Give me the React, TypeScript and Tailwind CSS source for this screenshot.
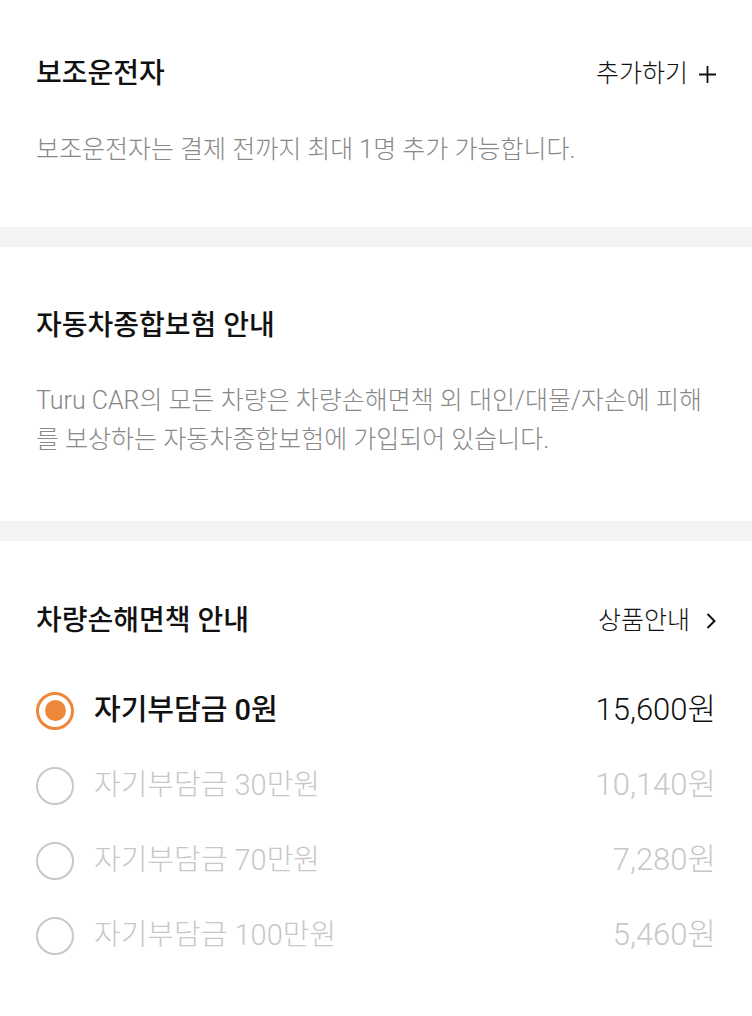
import React from 'react';

const options = [
  { label: '자기부담금 0원', price: '15,600원' },
  { label: '자기부담금 30만원', price: '10,140원' },
  { label: '자기부담금 70만원', price: '7,280원' },
  { label: '자기부담금 100만원', price: '5,460원' },
];

const Radio: React.FC<{ checked: boolean }> = ({ checked }) =>
  checked ? (
    <span className="w-[38px] h-[38px] rounded-full border-[3px] border-[#ef873a] flex items-center justify-center shrink-0">
      <span className="w-[21px] h-[21px] rounded-full bg-[#ef873a]" />
    </span>
  ) : (
    <span className="w-[38px] h-[38px] rounded-full border-[2.5px] border-[#c8c8c8] shrink-0" />
  );

export default function App() {
  const selected = 0;

  return (
    <div
      className="min-h-screen bg-white text-[#111]"
      style={{ fontFamily: 'Roboto, "Noto Sans CJK KR", sans-serif' }}
    >
      {/* 보조운전자 */}
      <section className="px-9 pt-[56px] pb-[58px]">
        <div className="flex items-center justify-between h-9">
          <h2 className="text-[28px] font-medium">보조운전자</h2>
          <button className="flex items-center gap-[11px] text-[25px] font-light text-[#111]">
            추가하기
            <svg width="17" height="17" viewBox="0 0 17 17" fill="none" stroke="#111" strokeWidth="1.8">
              <path d="M8.5 0v17M0 8.5h17" />
            </svg>
          </button>
        </div>
        <p className="mt-[38px] text-[25px] leading-[39px] font-light text-[#888]">
          보조운전자는 결제 전까지 최대 1명 추가 가능합니다.
        </p>
      </section>

      <div className="h-5 bg-[#f3f3f3]" />

      {/* 자동차종합보험 안내 */}
      <section className="px-9 pt-[61px] pb-[62px]">
        <h2 className="h-9 flex items-center text-[28px] font-medium">자동차종합보험 안내</h2>
        <p className="mt-[37px] text-[25px] leading-[39px] font-light text-[#888]">
          Turu CAR의 모든 차량은 차량손해면책 외 대인/대물/자손에 피해를 보상하는 자동차종합보험에 가입되어 있습니다.
        </p>
      </section>

      <div className="h-5 bg-[#f3f3f3]" />

      {/* 차량손해면책 안내 */}
      <section className="px-9 pt-[62px] pb-[41px]">
        <div className="flex items-center justify-between h-9">
          <h2 className="text-[28px] font-medium">차량손해면책 안내</h2>
          <button className="flex items-center gap-[16px] text-[25px] font-light text-[#111]">
            상품안내
            <svg width="10" height="18" viewBox="0 0 10 18" fill="none" stroke="#111" strokeWidth="2">
              <path d="M1.5 2l7 7-7 7" />
            </svg>
          </button>
        </div>
        <ul className="mt-[34px]">
          {options.map((o, i) => {
            const on = i === selected;
            return (
              <li key={o.label} className="h-[75px] flex items-center">
                <Radio checked={on} />
                <span className={`ml-5 text-[29px] ${on ? 'text-[#111] font-medium' : 'font-light text-[#c8c8c8]'}`}>
                  {o.label}
                </span>
                <span className={`ml-auto text-[31px] font-light ${on ? 'text-[#111]' : 'text-[#c8c8c8]'}`}>
                  {o.price}
                </span>
              </li>
            );
          })}
        </ul>
      </section>
    </div>
  );
}
